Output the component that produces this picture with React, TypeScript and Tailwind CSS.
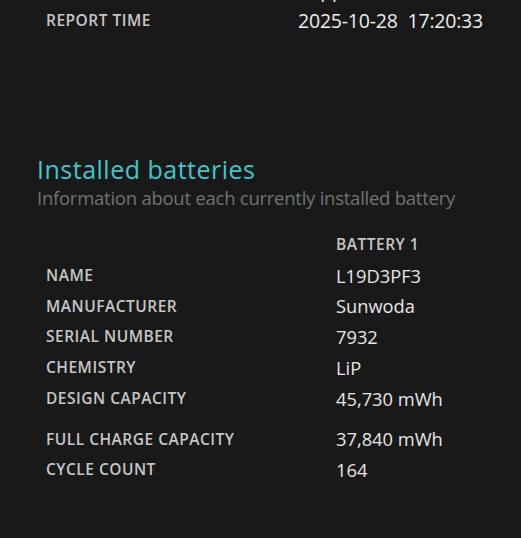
const FONT = { fontFamily: '"Open Sans", "Noto Sans", sans-serif' }

const TOP_ROWS = [
  { label: 'CONNECTED STANDBY', value: 'Supported' },
  { label: 'REPORT TIME', value: '2025-10-28  17:20:33' },
]

const BATTERY_ROWS = [
  { label: 'NAME', value: 'L19D3PF3' },
  { label: 'MANUFACTURER', value: 'Sunwoda' },
  { label: 'SERIAL NUMBER', value: '7932' },
  { label: 'CHEMISTRY', value: 'LiP' },
  { label: 'DESIGN CAPACITY', value: '45,730 mWh', gap: true },
  { label: 'FULL CHARGE CAPACITY', value: '37,840 mWh' },
  { label: 'CYCLE COUNT', value: '164' },
]

export default function App() {
  return (
    <div className="h-[538px] w-[521px] overflow-hidden bg-[#191919]" style={FONT}>
      {/* Report header (scrolled) */}
      <div className="-mt-[26px]">
        {TOP_ROWS.map(r => (
          <div key={r.label} className="grid h-[31px] grid-cols-[252px_1fr] items-center pl-[46px]">
            <span className="text-[15.5px] font-semibold tracking-[0.5px] text-[#c6c6c6]">{r.label}</span>
            <span className="whitespace-pre text-[19.5px] tracking-[-0.2px] text-[#ececec]">{r.value}</span>
          </div>
        ))}
      </div>

      {/* Installed batteries */}
      <div className="mt-[118px] pl-[37px]">
        <h2 className="h-[30px] text-[25px] leading-[30px] tracking-[0.5px] text-[#43c6c9]">Installed batteries</h2>
        <p className="mt-[2px] h-[24px] text-[18.5px] leading-[24px] tracking-[-0.25px] text-[#727272]">
          Information about each currently installed battery
        </p>
      </div>

      <div className="mt-[19px] pl-[46px]">
        <div className="grid h-[31px] grid-cols-[290px_1fr] items-center">
          <span />
          <span className="text-[15.5px] font-semibold tracking-[0.5px] text-[#c6c6c6]">BATTERY 1</span>
        </div>
        {BATTERY_ROWS.map(r => (
          <div
            key={r.label}
            className={`grid h-[30.75px] grid-cols-[290px_1fr] items-center ${r.gap ? 'mb-[10px]' : ''}`}
          >
            <span className="text-[15.5px] font-semibold tracking-[0.5px] text-[#c6c6c6]">{r.label}</span>
            <span className="text-[18.3px] tracking-[0px] text-[#e6e6e6]">{r.value}</span>
          </div>
        ))}
      </div>
    </div>
  )
}
